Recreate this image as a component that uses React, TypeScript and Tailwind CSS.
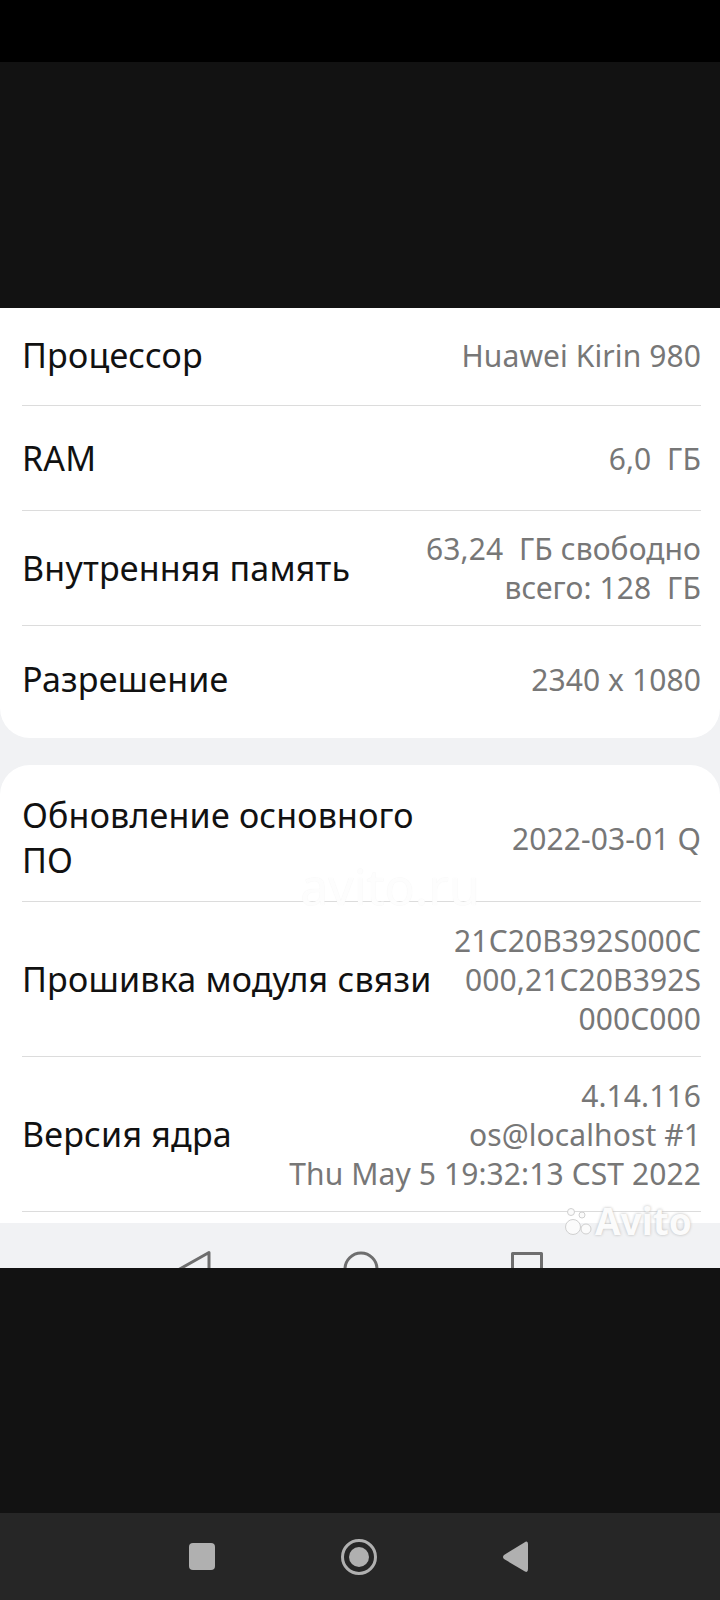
const baseFont = "font-['Noto_Sans',sans-serif]";

interface Row {
  label: string;
  value: string[];
  height: string;
}

const hardware: Row[] = [
  { label: "Процессор", value: ["Huawei Kirin 980"], height: "h-[98px] pb-[3px]" },
  { label: "RAM", value: ["6,0  ГБ"], height: "h-[105px]" },
  { label: "Внутренняя память", value: ["63,24  ГБ свободно", "всего: 128  ГБ"], height: "h-[115px]" },
];

const software: Row[] = [
  { label: "Обновление основного ПО", value: ["2022-03-01 Q"], height: "h-[137px] pt-[10px]" },
  { label: "Прошивка модуля связи", value: ["21C20B392S000C", "000,21C20B392S", "000C000"], height: "h-[155px]" },
  { label: "Версия ядра", value: ["4.14.116", "os@localhost #1", "Thu May 5 19:32:13 CST 2022"], height: "h-[155px]" },
];

function InfoRow({ row, last }: { row: Row; last?: boolean }) {
  return (
    <div
      className={`flex items-center justify-between gap-3 ${row.height} ${last ? "" : "border-b border-[#dcdcdc]"}`}
    >
      <div className="max-w-[420px] shrink-0 text-[34px] leading-[45px] tracking-[0.2px] text-[#111111]">
        {row.label}
      </div>
      <div className="whitespace-pre text-right text-[30px] leading-[39px] tracking-[0.1px] text-[#777777]">
        {row.value.map((line) => (
          <div key={line}>{line}</div>
        ))}
      </div>
    </div>
  );
}

export default function App() {
  return (
    <div className={`flex h-[1600px] w-[720px] flex-col overflow-hidden bg-[#121212] ${baseFont}`}>
      <div className="h-[62px] shrink-0 bg-black" />
      <div className="h-[246px] shrink-0" />

      {/* the captured settings screen */}
      <div className="relative h-[960px] shrink-0 overflow-hidden bg-[#f1f2f4]">
        <section className="rounded-b-[30px] bg-white pr-[19px] pl-[22px]">
          {hardware.map((row) => (
            <InfoRow key={row.label} row={row} />
          ))}
          <InfoRow last row={{ label: "Разрешение", value: ["2340 x 1080"], height: "h-[112px] pb-[6px]" }} />
        </section>

        <section className="mt-[27px] h-[458px] rounded-t-[30px] bg-white pr-[19px] pl-[22px]">
          {software.map((row) => (
            <InfoRow key={row.label} row={row} />
          ))}
        </section>

        {/* system navigation, cut off by the bottom of the capture */}
        <svg className="absolute left-[170px] top-[940px]" width="380" height="20" viewBox="0 0 380 20" fill="none" stroke="#6e6e6e" strokeWidth="3">
          <path d="M39 22V4.5L8 22" strokeLinejoin="round" />
          <circle cx="191" cy="21" r="16" />
          <path d="M342.500 22V5.500H371.500V22" strokeLinejoin="round" />
        </svg>

        {/* faint site stamp across the middle */}
        <div className="pointer-events-none absolute left-[295px] top-[556px] w-[190px] text-center text-[50px] leading-[44px] text-white/90 [text-shadow:0_0_1px_#eeeeee]">
          avito.ru
        </div>

        {/* corner watermark */}
        <div className="pointer-events-none absolute left-[564px] top-[894px] flex items-center gap-[1px] text-[#fbfbfb] [text-shadow:0_0_3px_#b5b5b5]">
          <svg width="30" height="30" viewBox="0 0 30 30" fill="#fbfbfb" stroke="#d0d0d0" strokeWidth="1">
            <circle cx="9" cy="21" r="7.500" />
            <circle cx="22" cy="23" r="5" />
            <circle cx="7" cy="6" r="3.500" />
            <circle cx="18" cy="9" r="3" />
          </svg>
          <span className="text-[37px] leading-none font-bold">Avito</span>
        </div>
      </div>

      <div className="min-h-0 flex-1" />

      {/* device navigation bar */}
      <nav className="relative h-[87px] shrink-0 bg-[#262626]">
        <svg className="absolute inset-0" width="720" height="87" viewBox="0 0 720 87" fill="#b0b0b0">
          <rect x="189" y="30" width="26" height="27" rx="4" />
          <circle cx="359" cy="44" r="16.500" fill="none" stroke="#b0b0b0" strokeWidth="3" />
          <circle cx="359" cy="44" r="10" />
          <path d="M526 28.500Q528 28 528 31V56Q528 60 525 58.500L504 46Q502 44 504 42Z" />
        </svg>
      </nav>
    </div>
  );
}
